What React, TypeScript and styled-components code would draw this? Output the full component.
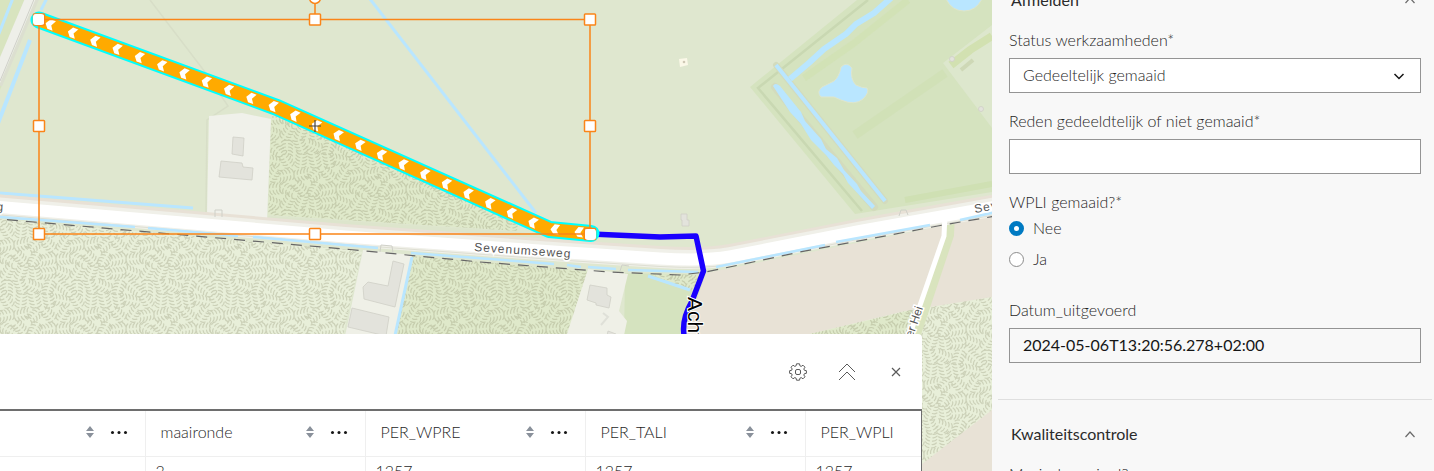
import React from "react";
import styled, { createGlobalStyle } from "styled-components";

const GlobalStyle = createGlobalStyle`
  * { box-sizing: border-box; }
  body {
    margin: 0;
    font-family: Lato, "Open Sans", sans-serif;
    font-size: 16px;
    font-weight: 300;
    line-height: 20px;
    color: #1f1f1f;
    background: #f8f8f8;
  }
`;

const Page = styled.div`
  display: flex;
  height: 100vh;
  overflow: hidden;
`;

const MapArea = styled.main`
  position: relative;
  flex: 1;
  min-width: 0;
  overflow: hidden;
  background: #dfe7cf;
`;

const MapCanvas = styled.svg`
  display: block;
  width: 100%;
  height: 100%;
`;

const Drawer = styled.section`
  position: absolute;
  left: 0;
  right: 70px;
  bottom: 0;
  height: 137px;
  overflow: hidden;
  background: #fff;
  border-top-right-radius: 4px;
`;

const DrawerBar = styled.div`
  display: flex;
  justify-content: flex-end;
  align-items: center;
  gap: 25px;
  height: 75px;
  padding-right: 14px;
`;

const IconButton = styled.button`
  display: flex;
  align-items: center;
  justify-content: center;
  width: 24px;
  height: 24px;
  padding: 0;
  border: 0;
  background: none;
  color: #5a5a5a;
`;

const TableFrame = styled.div`
  overflow: hidden;
  height: 62px;
  border-top: 2px solid #6e6e6e;
  border-right: 1px solid #6e6e6e;
`;

const DataTable = styled.table`
  table-layout: fixed;
  width: 1025px;
  border-collapse: collapse;
`;

const HeadCell = styled.th<{ $first?: boolean }>`
  width: ${(p) => (p.$first ? "145px" : "220px")};
  height: 45px;
  padding: 0 17px 2px 15px;
  border-right: 1px solid #efefef;
  border-bottom: 1px solid #efefef;
  font-weight: 300;
  text-align: left;
`;

const HeadContent = styled.div`
  display: flex;
  align-items: center;
  justify-content: space-between;
  height: 42px;
`;

const HeadTools = styled.span`
  display: flex;
  align-items: center;
  gap: 16px;
`;

const ToolButton = styled.button`
  display: flex;
  padding: 0;
  border: 0;
  background: none;
`;

const BodyCell = styled.td`
  height: 30px;
  padding: 0 10px;
  border-right: 1px solid #efefef;
`;

const FormPanel = styled.aside`
  flex: 0 0 442px;
  overflow: hidden;
  background: #f8f8f8;
`;

const Group = styled.section`
  margin: 0 2px 0 6px;
  padding: 4px 11px 36px;
  border-bottom: 1px solid #dfdfdf;
`;

const FirstGroup = styled(Group)`
  margin-top: -34px;
`;

const GroupHeader = styled.button`
  display: flex;
  justify-content: space-between;
  align-items: center;
  width: 100%;
  height: 60px;
  padding: 0 5px 0 2px;
  border: 0;
  background: none;
  color: #2b2b2b;
  font: inherit;
  font-weight: 400;
`;

const Field = styled.div`
  display: flex;
  flex-direction: column;
  gap: 8px;
  margin-bottom: 18px;

  &:last-child { margin-bottom: 0; }
`;

const Label = styled.label`
  line-height: 20px;
`;

const SelectWrap = styled.div`
  position: relative;

  svg {
    position: absolute;
    right: 16px;
    top: 12px;
    pointer-events: none;
  }
`;

const control = `
  display: block;
  width: 100%;
  height: 35px;
  padding: 0 13px 2px;
  border: 1px solid #949494;
  border-radius: 0;
  font: inherit;
`;

const Select = styled.select`
  ${control}
  appearance: none;
  background: #fff;
  color: #1f1f1f;
`;

const TextInput = styled.input`
  ${control}
  background: #fff;
  color: #151515;
  font-weight: 400;

  &:read-only { background: #f8f8f8; }
`;

const RadioGroup = styled.fieldset`
  margin: 0 0 26px;
  padding: 0;
  border: 0;

  legend { padding: 0; }
`;

const RadioLabel = styled.label`
  display: flex;
  align-items: center;
  gap: 9px;
  height: 31px;
`;

const Radio = styled.input`
  appearance: none;
  width: 15px;
  height: 15px;
  margin: 2px 0 0;
  border: 1px solid #8c8c8c;
  border-radius: 50%;
  background: #fff;

  &:checked { border: 5px solid #007ac2; }
`;

/* Land-cover texture: small feather-like combs on a repeating tile. */
const TILE = 70;
const CELL = 14;

function buildTexture() {
  let seed = 11;
  const random = () => {
    seed = (seed * 16807) % 2147483647;
    return seed / 2147483647;
  };
  const strokes: string[] = [];
  for (let row = 0; row < 5; row++) {
    for (let col = 0; col < 5; col++) {
      const cx = col * CELL + 7;
      const cy = row * CELL + 7;
      const angle = random() * Math.PI * 2;
      const cos = Math.cos(angle);
      const sin = Math.sin(angle);
      const at = (x: number, y: number) =>
        `${(cx + x * cos - y * sin).toFixed(1)} ${(cy + x * sin + y * cos).toFixed(1)}`;
      for (let i = -2; i <= 2; i++) {
        const y = i * 3.4;
        strokes.push(`M${at(-1.5, y)}Q${at(-4, y)} ${at(-5.5, y + 2)}`);
        strokes.push(`M${at(1.5, y)}Q${at(4, y)} ${at(5.5, y + 2)}`);
      }
    }
  }
  return strokes.join("");
}

const texture = buildTexture();

function Texture({ id, fill, stroke }: { id: string; fill: string; stroke: string }) {
  const shifts = [-TILE, 0, TILE];
  return (
    <pattern id={id} width={TILE} height={TILE} patternUnits="userSpaceOnUse">
      <rect width={TILE} height={TILE} fill={fill} />
      <g fill="none" stroke={stroke} strokeWidth="1.2" strokeLinecap="round">
        {shifts.map((dx) =>
          shifts.map((dy) => (
            <path key={`${dx},${dy}`} d={texture} transform={`translate(${dx} ${dy})`} />
          ))
        )}
      </g>
    </pattern>
  );
}

const arrows: { x: number; y: number; a: number }[] = [];
for (let i = 0; i < 11; i++) arrows.push({ x: 50 + i * 22.3, y: 24.4 + i * 8.16, a: 20 });
for (let i = 0; i < 12; i++) arrows.push({ x: 294.5 + i * 21.66, y: 115.5 + i * 9.72, a: 24 });
arrows.push({ x: 555, y: 229.3, a: 8 }, { x: 579, y: 232, a: 6 });

const handles = [
  [39, 19.5], [315, 19.5], [590, 19.5],
  [39, 126], [590, 126],
  [39, 234], [315, 234], [590, 234],
];

const ROAD = "M-5 206.5L345 236.5L560 252L660 258.5Q705 261 730 256.5L860 231L1000 206";
const ROUTE = "M39 20L277 107.5L549.5 229.5L591 233.5";

function MapDrawing() {
  return (
    <MapCanvas viewBox="0 0 992 471" preserveAspectRatio="xMinYMin slice" role="img" aria-label="Kaart">
      <defs>
        <Texture id="orchard" fill="#e8efd9" stroke="#ccd1b8" />
        <Texture id="grove" fill="#dfe9ca" stroke="#c6cdad" />
      </defs>

      {/* parcels */}
      <path d="M150 0L205 72L228 106L207 120L206 213" fill="none" stroke="#d6dcc5" strokeWidth="1.5" opacity=".8" />
      <path d="M0 0H34L0 90Z" fill="#d8e4bf" />
      <path d="M857 0L750 87L855 214L992 192V0Z" fill="#d5e3bf" />
      <path d="M868 0L758 88L862 211" fill="none" stroke="#c9d8b2" strokeWidth="2.5" />
      <path d="M908 0L853 44L804 78" fill="none" stroke="#cfe1ad" strokeWidth="7" opacity=".5" />
      <path d="M855 135L945 73" stroke="#d0e0b3" strokeWidth="9" opacity=".6" />
      <path d="M905 200L992 184" stroke="#cddfae" strokeWidth="6" opacity=".7" />
      <path d="M943 63L992 25V128Z" fill="#dde7cd" />
      <path d="M951 65L970 50L992 36" fill="none" stroke="#d2e1b1" strokeWidth="8" />
      <path d="M961 70L973 60" stroke="#c5cfa8" strokeWidth="4" opacity=".6" />
      <path d="M0 219L350 250L362 252L342 340H0Z" fill="url(#orchard)" />
      <path d="M271 116L290 116L340 144L518 217V231L268 215Z" fill="url(#grove)" />
      <path d="M268 216L518 232L585 241L540 246L268 224Z" fill="#dde5cc" />
      <path d="M412 256L588 271L567 340H392Z" fill="url(#grove)" />
      <path d="M625 273L706 275L684 340H624Z" fill="#d5e3bf" />
      <path d="M650 274L706 275L696 292Z" fill="url(#grove)" />
      <path d="M706 273L992 216V471H686V330Z" fill="#e8e2d6" />
      <path d="M810 334L905 311L992 297V410L922 464V345H810Z" fill="url(#orchard)" />
      <path d="M810 334L912 310L904 334Z" fill="url(#grove)" />

      {/* farmyards and buildings */}
      <path d="M209 116L242 113L271 119L267 220L207 214Z" fill="#f0f1ea" />
      <path d="M363 250L412 255L394 340H344L347 327Z" fill="#eff0e7" />
      <path d="M588 269L628 274L619 311L627 321L623 340H565Z" fill="#eff0e7" />
      <g fill="#e3e3dc" stroke="#cfcfc7" strokeWidth=".8">
        <path d="M233 137L244 138L243 156L232 154Z" />
        <path d="M221 161L242 163L243 167L253 168L252 180L219 177Z" />
        <path d="M393 261L404 264L395 307L364 299L363 287L368 282L388 286Z" />
        <path d="M352 308L389 317L386 336L348 327Z" />
        <path d="M590 285L607 288V295L611 297L609 308L596 305V303L587 300Z" />
        <path d="M681 214H687V220H689V226H682V220H681Z" />
        <circle cx="952" cy="59" r="2.5" />
        <circle cx="981" cy="109" r="2.5" />
        <path d="M608 331L616 334L615 340H606Z" />
      </g>
      <path d="M679 59L687 58L688 65L680 67Z" fill="#fbf8e8" />
      <circle cx="684" cy="62" r="1.3" fill="#cfc8b5" />
      <path d="M603 313L608 317L601 325" fill="none" stroke="#dfe0d8" strokeWidth="2" />

      {/* water */}
      <g fill="none" stroke="#b9e6ff" strokeWidth="3">
        <path d="M370 -1L536 213" />
        <path d="M30 40L-3 126" strokeWidth="4" />
        <path d="M13 -2L-2 36M47 -2L41 10" />
        <path d="M0 193L193 208" />
        <path d="M412 257L394 340" />
        <path d="M648 276L690 290" />
      </g>
      <g fill="none" stroke="#d3dbbd" strokeLinejoin="round" strokeLinecap="round">
        <path d="M776 65L885 201" strokeWidth="6" />
        <path d="M775 87L874 207" strokeWidth="8" />
      </g>
      <path d="M891 -2L874 13L856 24L846 34L824 49L810 62L790 79" fill="none" stroke="#b9e6ff" strokeWidth="6" />
      <path d="M776 65L885 201" fill="none" stroke="#b9e6ff" strokeWidth="4" />
      <path d="M773 86Q775 82 780 86L801 112L805 121L821 139L826 149L837 158L844 170L857 184L861 191L875 206L872 209L848 183L843 174L834 165L826 155L811 140L801 124L790 112Z" fill="#b9e6ff" />
      <path d="M841 67Q847 61 852 68Q850 79 856 85Q862 88 867 88Q870 92 863 99Q855 106 841 100L834 97H821Q816 92 822 87L834 81Q839 77 841 67Z" fill="#b9e6ff" stroke="#dfe6cc" strokeWidth="1" />
      <path d="M946 -1Q952 11 964 11Q976 11 982 -1Z" fill="#b9e6ff" stroke="#dfe6cc" />

      {/* roads */}
      <path d="M33 -3L-4 84" stroke="#dcdfd0" strokeWidth="13" />
      <path d="M31 -3L-5 82" stroke="#eeefe9" strokeWidth="10" />
      <path d="M35 -3L0 81" stroke="#cfd0c8" strokeWidth="1" />
      <path d="M950 214L949 235L914 340" fill="none" stroke="#d9e4be" strokeWidth="10" />
      <path d={ROAD} transform="translate(0 -9)" fill="none" stroke="#e8e1d6" strokeWidth="7" />
      <path d={ROAD} fill="none" stroke="#f0f0e9" strokeWidth="19" />
      <path d={ROAD} transform="translate(0 8)" fill="none" stroke="#dedfd3" strokeWidth="1" />
      <path d={ROAD} fill="none" stroke="#fff" strokeWidth="12" />
      <path d="M945 214L944 236L908 340" fill="none" stroke="#fff" strokeWidth="5" />
      <path d="M0 217L135 227M148 228L238 236M253 237L378 248M411 253L554 264M567 265L581 267M588 267L616 269M628 270L698 272M716 267L825 245M836 242L930 225M960 220L996 212" fill="none" stroke="#b9e6ff" strokeWidth="2.5" />
      <path d="M-12 218L350 249.5L480 262L610 272L680 275L706 272L800 252L943 225L996 216" fill="none" stroke="#666" strokeWidth="1.2" strokeDasharray="11 8" />
      <path d="M215 217V210H222V217M380 252L381 245L392 246L393 253M620 271L622 265L629 266M899 216L901 210H906L908 215" fill="none" stroke="#cfd0c8" />

      {/* street names */}
      <g fill="#555" stroke="#fff" strokeWidth="3" paintOrder="stroke" fontFamily="Liberation Sans, sans-serif" fontSize="12">
        <text transform="translate(474 251) rotate(4)" letterSpacing="1">Sevenumseweg</text>
        <text transform="translate(975 213) rotate(-10)" letterSpacing="1">Sev</text>
        <text transform="translate(3 211) rotate(4)" textAnchor="end">g</text>
        <text transform="translate(923 308) rotate(-71)" textAnchor="end">er Hei</text>
      </g>

      {/* watercourse network and selected stretch */}
      <path d="M591 234L660 237L696 236L703.500 271L692 301Q680 322 685 340" fill="none" stroke="#1a00ff" strokeWidth="5.500" strokeLinejoin="round" />
      <text transform="translate(688 297) rotate(90)" fontFamily="Liberation Sans, sans-serif" fontSize="21" fill="#000" stroke="#fff" strokeWidth="2" paintOrder="stroke">
        Acht
      </text>
      <path d={ROUTE} fill="none" stroke="#00ffff" strokeWidth="17" strokeLinecap="round" strokeLinejoin="round" />
      <path d={ROUTE} fill="none" stroke="#ffaa00" strokeWidth="13" strokeLinejoin="round" />
      <g fill="#fff">
        {arrows.map(({ x, y, a }) => (
          <path key={x} d="M-4.500 .5L-1 -5H4.500L1.500 .5L4.500 5H-1Z" transform={`translate(${x} ${y}) rotate(${a})`} />
        ))}
      </g>

      {/* transform box */}
      <g stroke="#fa8519" strokeWidth="1.500" fill="none">
        <path d="M39 19.500H590V234H39ZM315 19.500V4" />
        <circle cx="315" cy="-2" r="5.500" fill="#fff" />
        {handles.map(([x, y]) => (
          <rect key={`${x}-${y}`} x={x - 5.5} y={y - 5.5} width="11" height="11" rx=".8" fill="#fff" />
        ))}
      </g>
      <rect x="33" y="14" width="11" height="11" rx="3" fill="#fff" />
      <path d="M309 126H321M315 120V132" stroke="#444" strokeWidth="1.200" />
      <rect x="585" y="229" width="11" height="11" rx="3" fill="#fff" />
    </MapCanvas>
  );
}

function GearIcon() {
  return (
    <svg width="18" height="18" viewBox="0 0 18 18" fill="none" stroke="currentColor" strokeLinejoin="round">
      <path d="M7.500.8h3l.4 2 1.300.6 1.800-1.200 2 2-1.200 1.800.6 1.300 2 .4v2.600l-2 .4-.6 1.300 1.200 1.800-2 2-1.800-1.200-1.300.6-.4 2h-3l-.4-2-1.300-.6L4 15.800l-2-2L3.200 12l-.6-1.300-2-.4V7.700l2-.4L3.200 6 2 4.200l2-2 1.800 1.200 1.300-.6z" />
      <rect x="6.500" y="6.500" width="5" height="5" rx="1.500" />
    </svg>
  );
}

function SortIcon() {
  return (
    <svg width="8" height="12" viewBox="0 0 8 12" fill="#8a919b">
      <path d="M4 0L8 5H0ZM4 12L0 7H8Z" />
    </svg>
  );
}

function DotsIcon() {
  return (
    <svg width="18" height="4" viewBox="0 0 18 4" fill="#151515">
      <circle cx="2.500" cy="2.500" r="1.500" />
      <circle cx="9" cy="2.500" r="1.500" />
      <circle cx="15.500" cy="2.500" r="1.500" />
    </svg>
  );
}

function ChevronUp() {
  return (
    <svg width="12" height="8" viewBox="0 0 12 8" fill="none" stroke="#6a6a6a" strokeWidth="1.200">
      <path d="M1.500 7L6 2L10.500 7" />
    </svg>
  );
}

const columns = [
  { name: "", value: "" },
  { name: "maaironde", value: "2" },
  { name: "PER_WPRE", value: "1257" },
  { name: "PER_TALI", value: "1257" },
  { name: "PER_WPLI", value: "1257" },
];

function AttributeTable() {
  return (
    <Drawer>
      <DrawerBar>
        <IconButton aria-label="Instellingen"><GearIcon /></IconButton>
        <IconButton aria-label="Uitklappen">
          <svg width="18" height="18" viewBox="0 0 18 18" fill="none" stroke="currentColor">
            <path d="M1 9L9 1L17 9M1 17L9 9L17 17" />
          </svg>
        </IconButton>
        <IconButton aria-label="Sluiten">
          <svg width="10" height="10" viewBox="0 0 10 10" fill="none" stroke="currentColor" strokeWidth="1.200">
            <path d="M1 1L9 9M9 1L1 9" />
          </svg>
        </IconButton>
      </DrawerBar>
      <TableFrame>
        <DataTable>
          <thead>
            <tr>
              {columns.map((column, i) => (
                <HeadCell key={i} $first={i === 0}>
                  <HeadContent>
                    <span>{column.name}</span>
                    <HeadTools>
                      <ToolButton aria-label="Sorteren"><SortIcon /></ToolButton>
                      <ToolButton aria-label="Meer opties"><DotsIcon /></ToolButton>
                    </HeadTools>
                  </HeadContent>
                </HeadCell>
              ))}
            </tr>
          </thead>
          <tbody>
            <tr>
              {columns.map((column, i) => (
                <BodyCell key={i}>{column.value}</BodyCell>
              ))}
            </tr>
          </tbody>
        </DataTable>
      </TableFrame>
    </Drawer>
  );
}

function FormSide() {
  return (
    <FormPanel>
      <FirstGroup>
        <GroupHeader>
          <span>Afmelden</span>
          <ChevronUp />
        </GroupHeader>
        <Field>
          <Label htmlFor="status">Status werkzaamheden*</Label>
          <SelectWrap>
            <Select id="status" defaultValue="deels">
              <option value="deels">Gedeeltelijk gemaaid</option>
            </Select>
            <svg width="12" height="12" viewBox="0 0 12 12" fill="none" stroke="#151515" strokeWidth="1.500">
              <path d="M1.500 4L6 8.500L10.500 4" />
            </svg>
          </SelectWrap>
        </Field>
        <Field>
          <Label htmlFor="reden">Reden gedeeldtelijk of niet gemaaid*</Label>
          <TextInput id="reden" />
        </Field>
        <RadioGroup>
          <legend>WPLI gemaaid?*</legend>
          <RadioLabel>
            <Radio type="radio" name="wpli" defaultChecked />
            Nee
          </RadioLabel>
          <RadioLabel>
            <Radio type="radio" name="wpli" />
            Ja
          </RadioLabel>
        </RadioGroup>
        <Field>
          <Label htmlFor="datum">Datum_uitgevoerd</Label>
          <TextInput id="datum" readOnly defaultValue="2024-05-06T13:20:56.278+02:00" />
        </Field>
      </FirstGroup>
      <Group>
        <GroupHeader>
          <span>Kwaliteitscontrole</span>
          <ChevronUp />
        </GroupHeader>
        <Field>
          <Label htmlFor="maaisel">Maaisel geruimd?</Label>
          <TextInput id="maaisel" />
        </Field>
      </Group>
    </FormPanel>
  );
}

export default function App() {
  return (
    <>
      <GlobalStyle />
      <Page>
        <MapArea>
          <MapDrawing />
          <AttributeTable />
        </MapArea>
        <FormSide />
      </Page>
    </>
  );
}
